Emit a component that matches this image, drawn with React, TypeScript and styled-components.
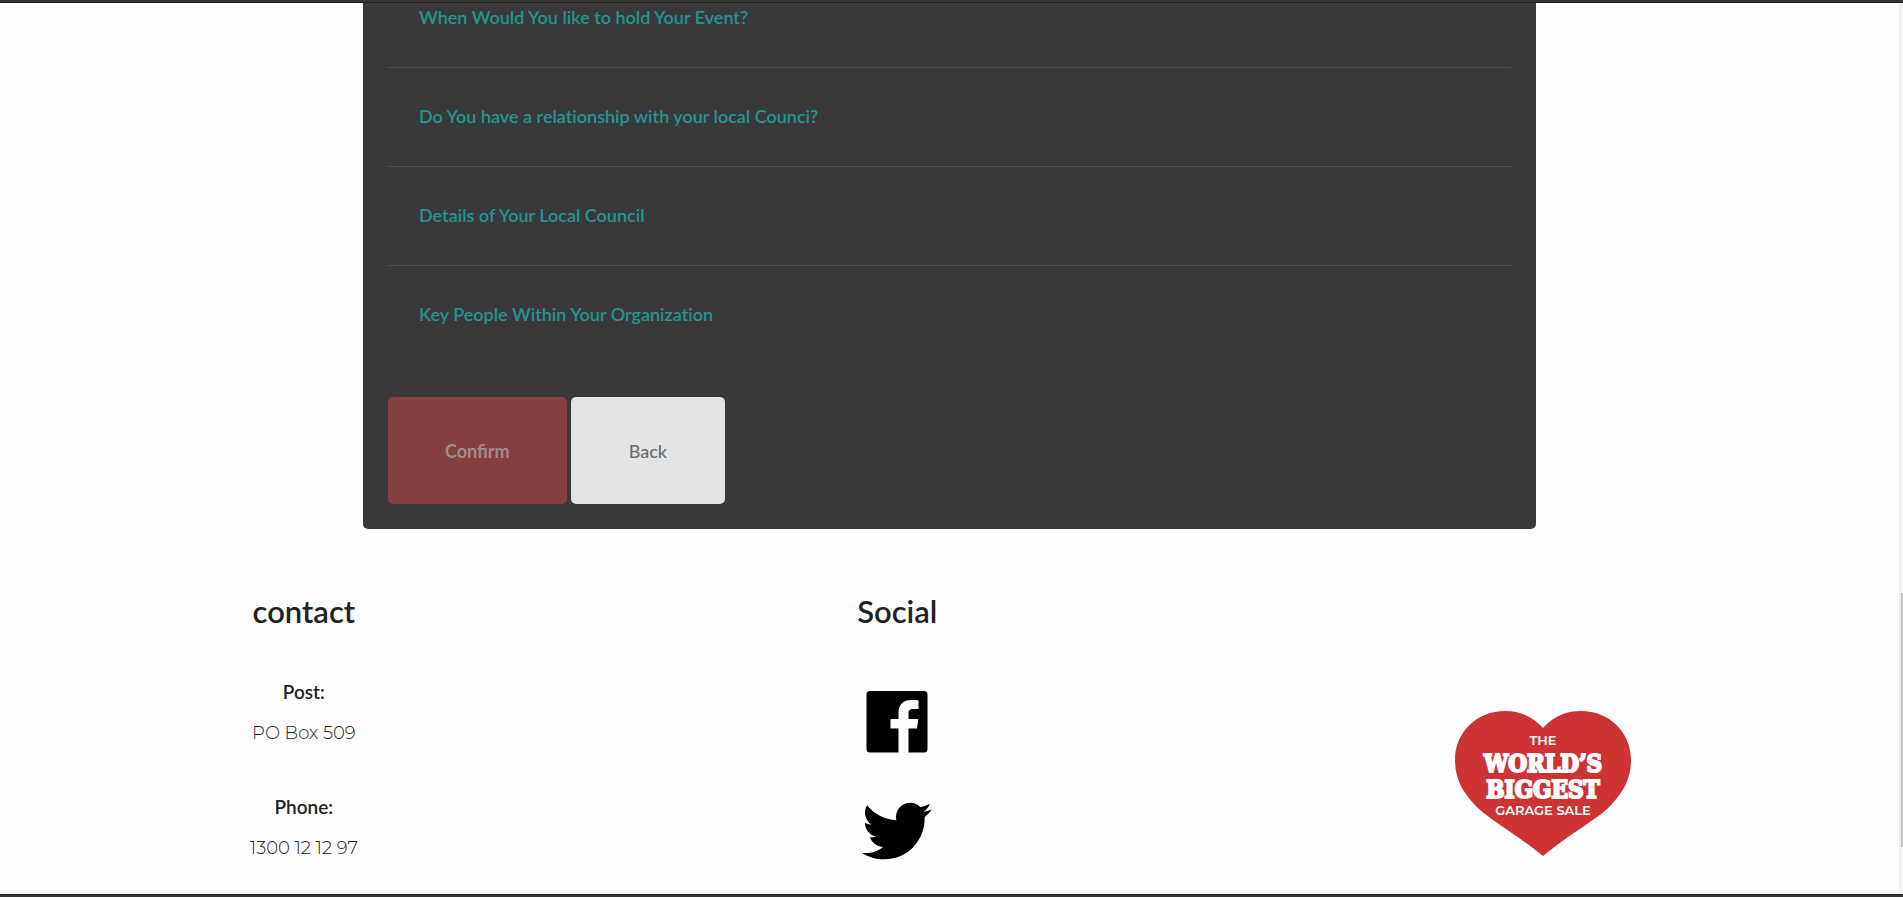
import React from "react";
import styled, { createGlobalStyle } from "styled-components";

const GlobalStyle = createGlobalStyle`
  * { box-sizing: border-box; }
  body {
    margin: 0;
    background: #fefefe;
    color: #212223;
    font-family: Lato, "Liberation Sans", sans-serif;
  }
  h2, h3, p { margin: 0; }
`;

const Page = styled.div`
  display: flex;
  flex-direction: column;
  min-height: 100vh;
`;

const Edge = styled.div<{ $side: "top" | "bottom" }>`
  height: 3px;
  flex: none;
  background: #363637;
  border-${(p) => (p.$side === "top" ? "bottom" : "top")}: 1px solid #222223;
`;

const Body = styled.div`
  flex: 1;
  display: flex;
`;

const Content = styled.div`
  flex: 1;
  min-width: 0;
`;

const ScrollTrack = styled.div`
  display: flex;
  flex-direction: column;
  align-items: flex-end;
  width: 4px;
  background: #f1f1f1;

  &::before { content: ""; flex: 590; }
  &::after { content: ""; flex: 47; }
`;

const ScrollThumb = styled.div`
  flex: 254;
  width: 2px;
  background: #c1c1c1;
`;

const Panel = styled.main`
  width: 62%;
  max-width: 1173px;
  margin: 0 auto;
  padding: 0 25px 25px;
  background: #39393b;
  border-radius: 0 0 5px 5px;
`;

const Questions = styled.ul`
  margin: 0 0 33px;
  padding: 0;
  list-style: none;
`;

const Question = styled.li`
  padding: 34px 31px 36px;
  border-bottom: 1px solid #505052;
  color: #259490;
  font-size: 18px;
  font-variant-ligatures: none;
  font-weight: 600;
  line-height: 28px;

  &:first-child { padding-top: 0; }
  &:last-child { border-bottom: 0; }
`;

const Actions = styled.div`
  display: flex;
  gap: 4px;
`;

const Button = styled.button<{ $primary?: boolean }>`
  height: 107px;
  padding: 0 ${(p) => (p.$primary ? 57 : 58)}px;
  border: 0;
  border-radius: 5px;
  background: ${(p) => (p.$primary ? "#843f41" : "#e3e4e6")};
  color: ${(p) => (p.$primary ? "#a08c8d" : "#6b6c6d")};
  font-family: inherit;
  font-size: 18px;
  font-weight: ${(p) => (p.$primary ? 700 : 500)};
`;

const Footer = styled.footer`
  display: grid;
  grid-template-columns: 64fr 61fr 75fr;
  padding: 62px 0 26px;
`;

const Column = styled.section`
  display: flex;
  flex-direction: column;
  align-items: center;
`;

const Heading = styled.h2`
  margin-bottom: 45px;
  font-size: 31px;
  font-weight: 600;
  line-height: 40px;
`;

const Entry = styled.div`
  text-align: center;
  & + & { margin-top: 38px; }
`;

const Label = styled.h3`
  margin-bottom: 5px;
  font-size: 19px;
  font-weight: 600;
  line-height: 32px;
`;

const Value = styled.p`
  font-family: Montserrat, Inter, sans-serif;
  font-size: 18px;
  font-weight: 300;
  line-height: 40px;
`;

const SocialLinks = styled.nav`
  display: flex;
  flex-direction: column;
  gap: 44px;
  padding-top: 9px;
`;

const SocialLink = styled.a`
  display: flex;
  color: #000;
`;

const LogoColumn = styled(Column)`
  justify-content: flex-end;
  padding-bottom: 11px;
`;

const questions = [
  "When Would You like to hold Your Event?",
  "Do You have a relationship with your local Counci?",
  "Details of Your Local Council",
  "Key People Within Your Organization",
];

const contacts = [
  { label: "Post:", value: "PO Box 509" },
  { label: "Phone:", value: "1300 12 12 97" },
];

const FacebookIcon = () => (
  <svg width="70" height="73" viewBox="0 0 70 73" fill="currentColor" aria-hidden="true">
    <path d="M8 6h54a3.500 3.500 0 0 1 3.500 3.500v54.500a3.500 3.500 0 0 1-3.500 3.500H46.500V43.500h8.500l1.300-9.500h-9.800v-5.500c0-2.800 1-4.500 4.700-4.500h5.300V15.500c-1-.2-4.100-.5-7.500-.5C41.500 15 36.500 19.500 36.500 27.500V34H28.500v9.500h8V67.500H8A3.500 3.500 0 0 1 4.500 64V9.500A3.500 3.500 0 0 1 8 6z" />
  </svg>
);

const TwitterIcon = () => (
  <svg width="70" height="58" viewBox="0 2 24 20" fill="currentColor" aria-hidden="true">
    <path d="M23.954 4.569c-.885.389-1.830.654-2.825.775 1.014-.611 1.794-1.574 2.163-2.723-.951.555-2.005.959-3.127 1.184-.896-.959-2.173-1.559-3.591-1.559-2.717 0-4.920 2.203-4.920 4.917 0 .390.045.765.127 1.124C7.691 8.094 4.066 6.130 1.640 3.161c-.427.722-.666 1.561-.666 2.475 0 1.710.870 3.213 2.188 4.096-.807-.026-1.566-.248-2.228-.616v.061c0 2.385 1.693 4.374 3.946 4.827-.413.111-.849.171-1.296.171-.314 0-.615-.030-.916-.086.631 1.953 2.445 3.377 4.604 3.417-1.680 1.319-3.809 2.105-6.102 2.105-.390 0-.779-.023-1.170-.067 2.189 1.394 4.768 2.209 7.557 2.209 9.054 0 13.999-7.496 13.999-13.986 0-.209 0-.420-.015-.630.961-.689 1.800-1.560 2.460-2.548z" />
  </svg>
);

const LogoSans = styled.text`
  font-family: Montserrat, Inter, sans-serif;
  font-size: 13px;
  font-weight: 600;
  fill: #fff;
`;

const LogoSlab = styled.text`
  font-family: "DejaVu Serif Condensed", "DejaVu Serif", serif;
  font-size: 24px;
  font-weight: 700;
  fill: #fff;
  stroke: #fff;
  stroke-width: 2px;
`;

const HeartLogo = () => (
  <svg width="176" height="147" viewBox="0 0 176 147" role="img" aria-label="The World's Biggest Garage Sale">
    <path
      d="M88 18C78 7 66 1 50 1 22 1 0 22 0 50 0 68 7 81 19 94 30 107 60 123 88 146 116 123 146 107 157 94 169 81 176 68 176 50 176 22 154 1 126 1 110 1 98 7 88 18z"
      fill="#cd3333"
    />
    <g textAnchor="middle">
      <LogoSans x="88" y="35">THE</LogoSans>
      <LogoSlab x="88" y="62">WORLD’S</LogoSlab>
      <LogoSlab x="88" y="88">BIGGEST</LogoSlab>
      <LogoSans x="88" y="105">GARAGE SALE</LogoSans>
    </g>
  </svg>
);

export default function App() {
  return (
    <>
      <GlobalStyle />
      <Page>
        <Edge $side="top" />
        <Body>
          <Content>
            <Panel>
              <Questions>
                {questions.map((q) => (
                  <Question key={q}>{q}</Question>
                ))}
              </Questions>
              <Actions>
                <Button type="button" $primary>Confirm</Button>
                <Button type="button">Back</Button>
              </Actions>
            </Panel>
            <Footer>
              <Column>
                <Heading>contact</Heading>
                {contacts.map((c) => (
                  <Entry key={c.label}>
                    <Label>{c.label}</Label>
                    <Value>{c.value}</Value>
                  </Entry>
                ))}
              </Column>
              <Column>
                <Heading>Social</Heading>
                <SocialLinks aria-label="Social">
                  <SocialLink href="#facebook" aria-label="Facebook"><FacebookIcon /></SocialLink>
                  <SocialLink href="#twitter" aria-label="Twitter"><TwitterIcon /></SocialLink>
                </SocialLinks>
              </Column>
              <LogoColumn>
                <HeartLogo />
              </LogoColumn>
            </Footer>
          </Content>
          <ScrollTrack aria-hidden="true">
            <ScrollThumb />
          </ScrollTrack>
        </Body>
        <Edge $side="bottom" />
      </Page>
    </>
  );
}
